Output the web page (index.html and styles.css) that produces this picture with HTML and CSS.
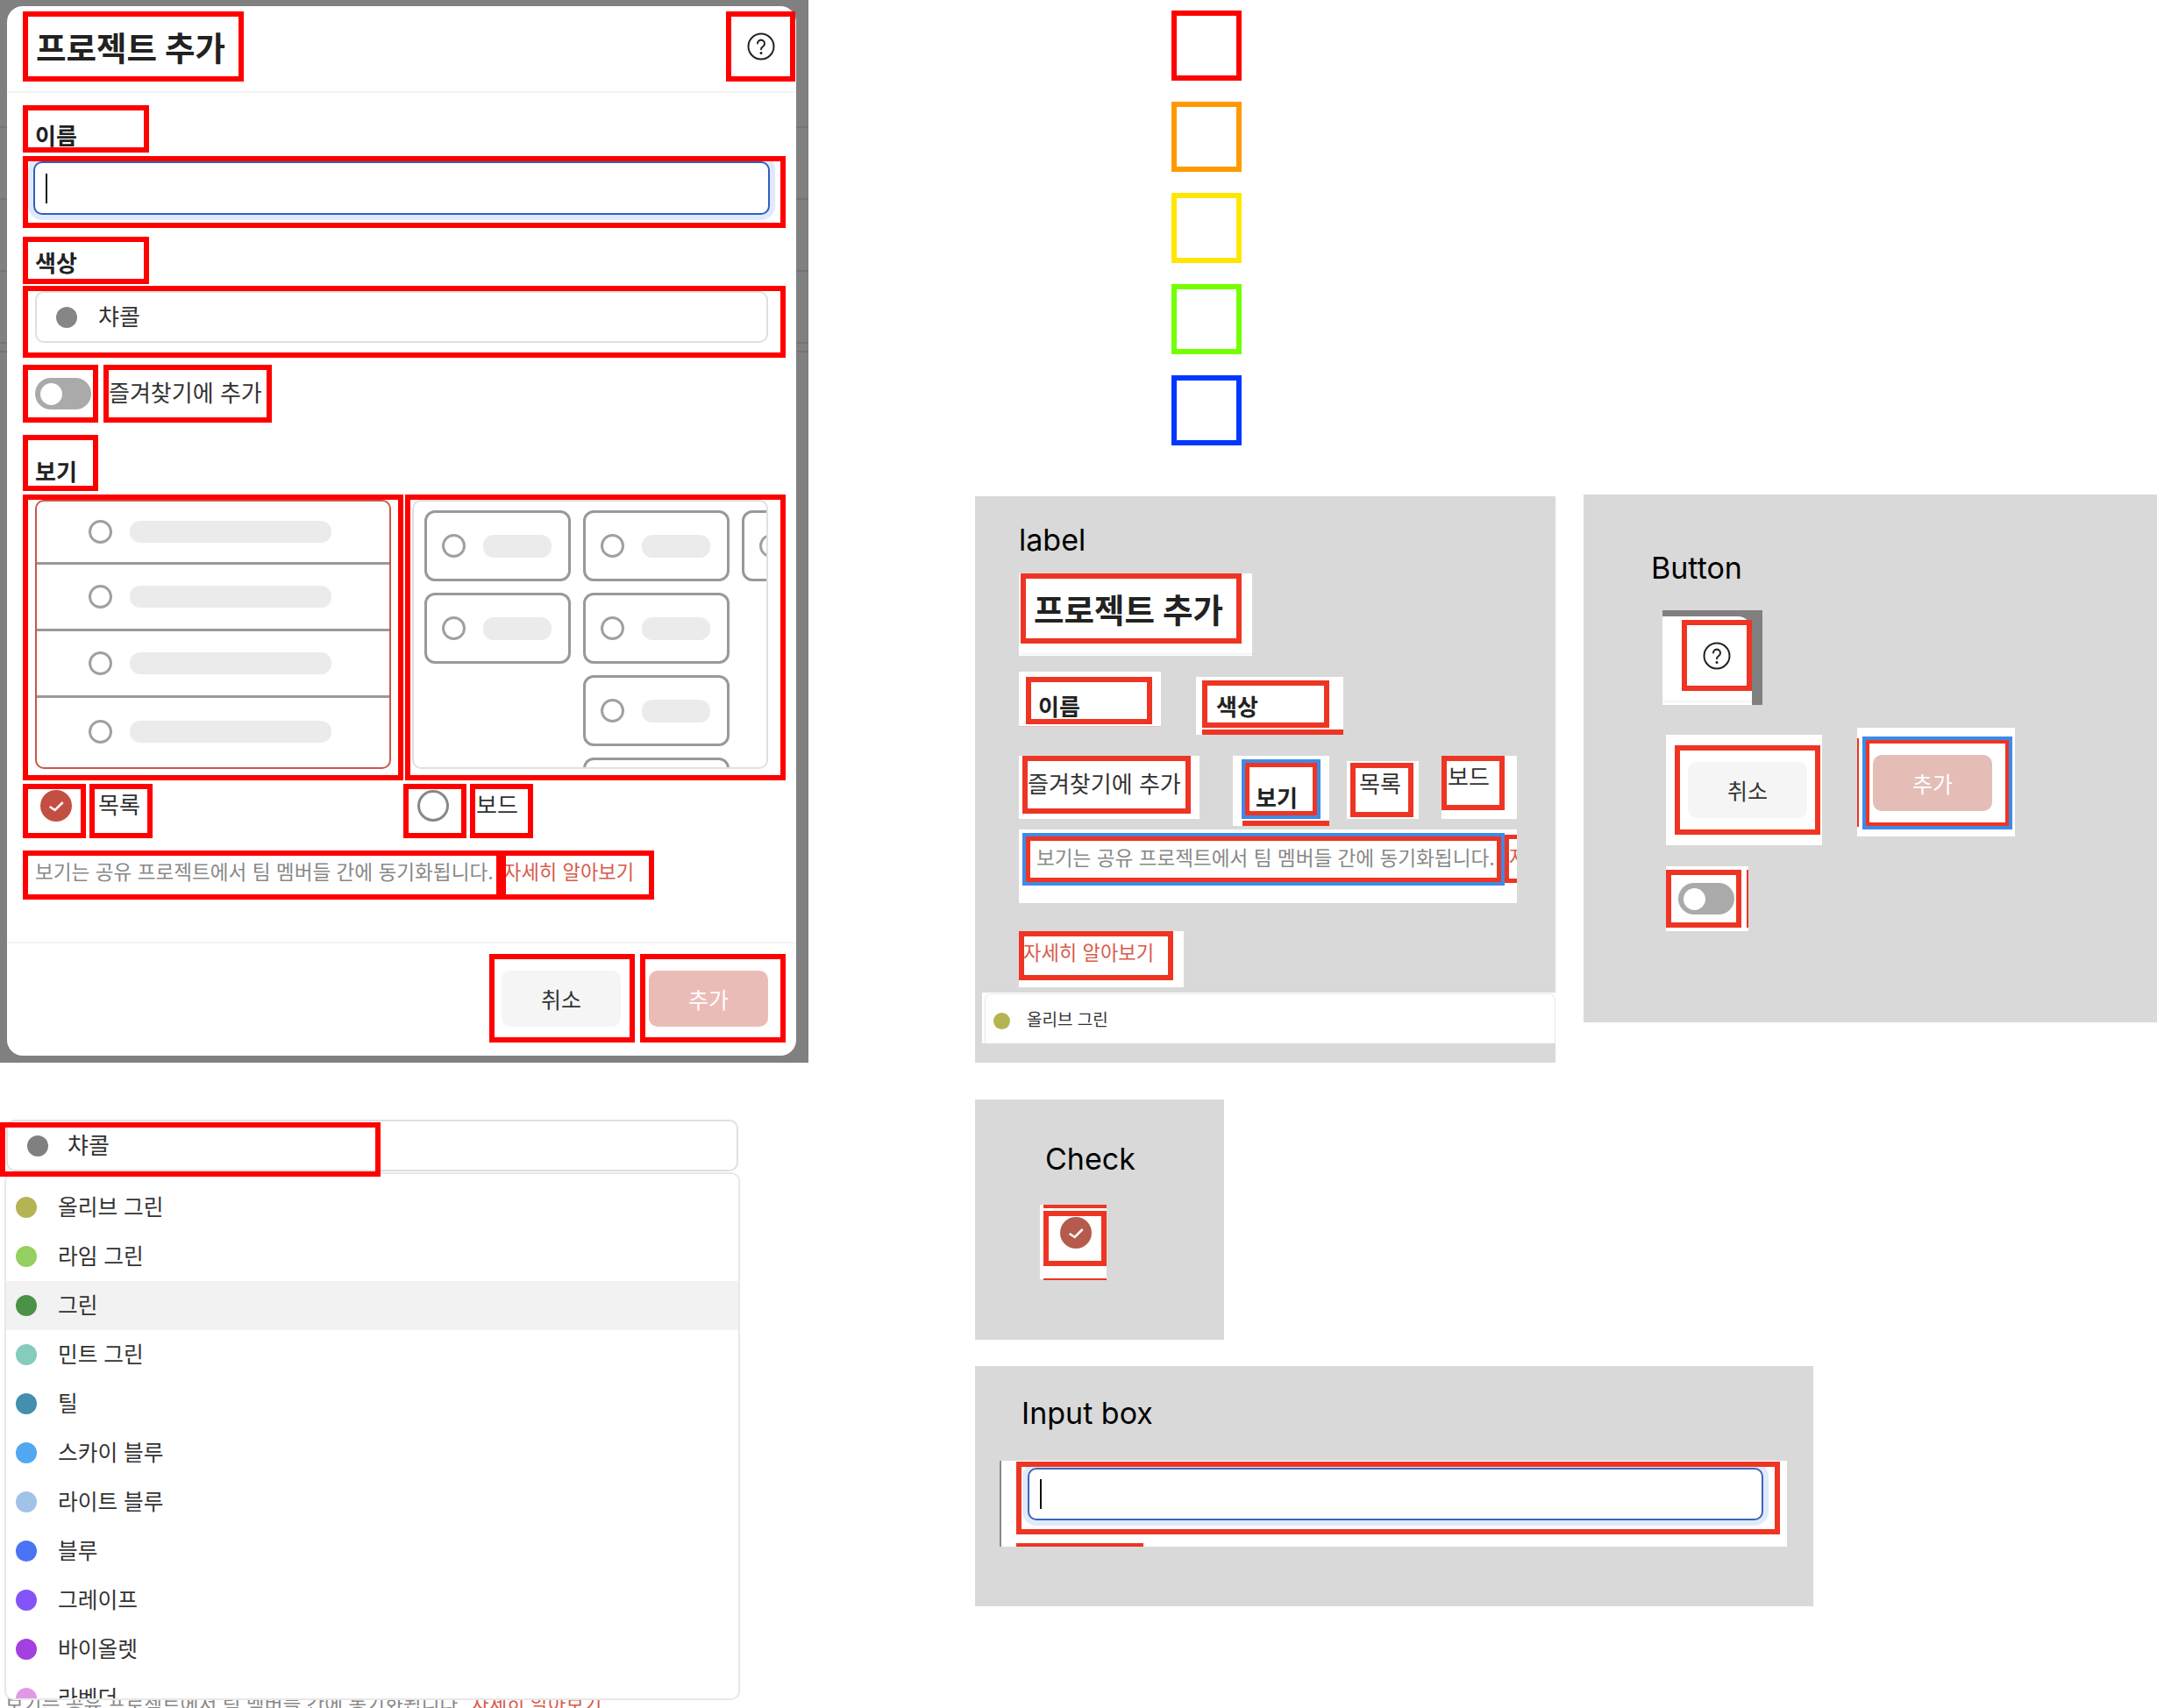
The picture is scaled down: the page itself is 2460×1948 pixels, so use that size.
FILE: index.html
```html
<!DOCTYPE html>
<html lang="ko">
<head>
    <meta charset="utf-8">
    <title>프로젝트 추가</title>
    <link rel="stylesheet" href="styles.css">
</head>
<body>
<div class="board">

    <!-- colour key -->
    <div class="key">
        <div class="key-box key-red"></div>
        <div class="key-box key-orange"></div>
        <div class="key-box key-yellow"></div>
        <div class="key-box key-green"></div>
        <div class="key-box key-blue"></div>
    </div>

    <!-- dialog -->
    <div class="backdrop">
        <div class="modal">
            <div class="modal-head">
                <div class="mark mark-title"><span class="title-text">프로젝트 추가</span></div>
                <div class="mark mark-help">
                    <svg class="help-icon" viewBox="0 0 32 32"><circle cx="16" cy="16" r="14.5"/><path d="M12 12.6a4 4 0 1 1 6.2 3.4c-1.4 .9-2.2 1.6-2.2 3.2"/><circle class="help-dot" cx="16" cy="23.4" r="1.5"/></svg>
                </div>
            </div>
            <div class="modal-body">
                <div class="mark mark-label mark-name"><span class="label-text">이름</span></div>
                <div class="mark mark-input"><div class="field"><span class="caret"></span></div></div>
                <div class="mark mark-label mark-color"><span class="label-text">색상</span></div>
                <div class="mark mark-select">
                    <div class="select"><span class="dot dot-charcoal"></span><span class="body-text">챠콜</span></div>
                </div>
                <div class="row-fav">
                    <div class="mark mark-toggle"><span class="toggle"><span class="knob"></span></span></div>
                    <div class="mark mark-fav"><span class="body-text">즐겨찾기에 추가</span></div>
                </div>
                <div class="mark mark-label mark-view"><span class="label-text">보기</span></div>
                <div class="row-previews">
                    <div class="mark mark-preview">
                        <div class="preview preview-list">
                            <div class="list-row"><span class="radio"></span><span class="bar bar-long"></span></div>
                            <div class="list-row"><span class="radio"></span><span class="bar bar-long"></span></div>
                            <div class="list-row"><span class="radio"></span><span class="bar bar-long"></span></div>
                            <div class="list-row list-row-last"><span class="radio"></span><span class="bar bar-long"></span></div>
                        </div>
                    </div>
                    <div class="mark mark-preview mark-preview-board">
                        <div class="preview preview-board">
                            <div class="tiles">
                                <div class="tile"><span class="radio"></span><span class="bar"></span></div>
                                <div class="tile"><span class="radio"></span><span class="bar"></span></div>
                                <div class="tile"><span class="radio"></span><span class="bar"></span></div>
                                <div class="tile"><span class="radio"></span><span class="bar"></span></div>
                                <div class="tile"><span class="radio"></span><span class="bar"></span></div>
                                <div class="tile tile-mid"><span class="radio"></span><span class="bar"></span></div>
                                <div class="tile tile-mid"><span class="radio"></span><span class="bar"></span></div>
                            </div>
                        </div>
                    </div>
                </div>
                <div class="row-options">
                    <div class="option">
                        <div class="mark mark-opt mark-check">
                            <svg class="check" viewBox="0 0 36 36"><circle class="check-bg" cx="18" cy="18" r="18"/><polyline class="check-tick" points="10.7,19 16.7,23 25.7,14"/></svg>
                        </div>
                        <div class="mark mark-opt"><span class="body-text">목록</span></div>
                    </div>
                    <div class="option">
                        <div class="mark mark-opt mark-check mark-check-off"><span class="radio radio-big"></span></div>
                        <div class="mark mark-opt mark-board-text"><span class="body-text">보드</span></div>
                    </div>
                </div>
                <div class="row-hint">
                    <div class="mark mark-hint"><span class="hint-text">보기는 공유 프로젝트에서 팀 멤버들 간에 동기화됩니다.</span></div>
                    <div class="mark mark-link"><span class="link-text">자세히 알아보기</span></div>
                </div>
            </div>
            <div class="modal-foot">
                <div class="mark mark-btn mark-cancel"><span class="btn btn-cancel">취소</span></div>
                <div class="mark mark-btn mark-add"><span class="btn btn-add">추가</span></div>
            </div>
        </div>
    </div>

    <!-- colour dropdown -->
    <div class="peek-hint"><span class="hint-text">보기는 공유 프로젝트에서 팀 멤버들 간에 동기화됩니다.</span> <span class="link-text peek-link">자세히 알아보기</span></div>
    <div class="select select-open"><span class="dot dot-charcoal dot-dark"></span><span class="body-text">챠콜</span></div>
    <div class="menu">
        <div class="menu-item"><span class="dot dot-olive"></span><span class="body-text">올리브 그린</span></div>
        <div class="menu-item"><span class="dot dot-lime"></span><span class="body-text">라임 그린</span></div>
        <div class="menu-item menu-item-on"><span class="dot dot-forest"></span><span class="body-text">그린</span></div>
        <div class="menu-item"><span class="dot dot-mint"></span><span class="body-text">민트 그린</span></div>
        <div class="menu-item"><span class="dot dot-teal"></span><span class="body-text">틸</span></div>
        <div class="menu-item"><span class="dot dot-sky"></span><span class="body-text">스카이 블루</span></div>
        <div class="menu-item"><span class="dot dot-light"></span><span class="body-text">라이트 블루</span></div>
        <div class="menu-item"><span class="dot dot-blue"></span><span class="body-text">블루</span></div>
        <div class="menu-item"><span class="dot dot-grape"></span><span class="body-text">그레이프</span></div>
        <div class="menu-item"><span class="dot dot-violet"></span><span class="body-text">바이올렛</span></div>
        <div class="menu-item"><span class="dot dot-lavender"></span><span class="body-text">라벤더</span></div>
    </div>
    <div class="mark menu-mark"></div>

    <!-- label parts -->
    <div class="panel panel-label"><span class="panel-title">label</span></div>
    <div class="strip s-title">
        <div class="cut cut-title"><span class="title-text">프로젝트 추가</span></div>
        <div class="rule"></div>
    </div>
    <div class="strip s-name">
        <div class="cut cut-name"><span class="label-text">이름</span></div>
    </div>
    <div class="strip s-color">
        <div class="cut cut-color"><span class="label-text">색상</span></div>
        <div class="cut-bar cut-bar-color"></div>
    </div>
    <div class="strip s-fav">
        <div class="cut cut-fav"><span class="body-text">즐겨찾기에 추가</span></div>
    </div>
    <div class="strip s-view">
        <div class="blue blue-view">
            <div class="cut cut-inner cut-view"><span class="label-text">보기</span></div>
        </div>
        <div class="cut-bar cut-bar-view"></div>
    </div>
    <div class="strip s-listword">
        <div class="cut cut-listword"><span class="body-text">목록</span></div>
    </div>
    <div class="strip s-boardword">
        <div class="cut cut-boardword"><span class="body-text">보드</span></div>
    </div>
    <div class="strip s-hint">
        <div class="blue blue-hint">
            <div class="cut cut-inner cut-hint"><span class="hint-text">보기는 공유 프로젝트에서 팀 멤버들 간에 동기화됩니다.</span></div>
        </div>
        <div class="cut cut-frag"><span class="link-text">자세히</span></div>
    </div>
    <div class="strip s-link">
        <div class="cut cut-link"><span class="link-text">자세히 알아보기</span></div>
    </div>
    <div class="strip s-olive">
        <div class="olive-card"><span class="dot dot-olive dot-small"></span><span class="small-text">올리브 그린</span></div>
    </div>

    <!-- button parts -->
    <div class="panel panel-button"><span class="panel-title">Button</span></div>
    <div class="strip s-help">
        <div class="help-crop">
            <div class="cut cut-help">
                <svg class="help-icon" viewBox="0 0 32 32"><circle cx="16" cy="16" r="14.5"/><path d="M12 12.6a4 4 0 1 1 6.2 3.4c-1.4 .9-2.2 1.6-2.2 3.2"/><circle class="help-dot" cx="16" cy="23.4" r="1.5"/></svg>
            </div>
            <div class="rule rule-help"></div>
        </div>
    </div>
    <div class="strip s-cancel">
        <div class="cut cut-cancel"><span class="btn btn-cancel">취소</span></div>
    </div>
    <div class="strip s-add">
        <div class="cut-sliver cut-sliver-add"></div>
        <div class="blue blue-add">
            <div class="cut cut-add"><span class="btn btn-add btn-add-crop">추가</span></div>
        </div>
    </div>
    <div class="strip s-toggle">
        <div class="cut cut-toggle"><span class="toggle"><span class="knob"></span></span></div>
        <div class="cut-sliver cut-sliver-toggle"></div>
    </div>

    <!-- check part -->
    <div class="panel panel-check"><span class="panel-title">Check</span></div>
    <div class="strip s-check">
        <div class="cut-bar cut-bar-check"></div>
        <div class="cut cut-check">
            <svg class="check" viewBox="0 0 36 36"><circle class="check-bg check-bg-crop" cx="18" cy="18" r="18"/><polyline class="check-tick" points="10.7,19 16.7,23 25.7,14"/></svg>
        </div>
        <div class="cut-bar cut-bar-check2"></div>
    </div>

    <!-- input part -->
    <div class="panel panel-input"><span class="panel-title">Input box</span></div>
    <div class="strip s-input">
        <div class="cut cut-input"><div class="field field-crop"><span class="caret"></span></div></div>
        <div class="cut-bar cut-bar-input"></div>
    </div>

</div>
</body>
</html>
```

FILE: styles.css
```css
* { box-sizing: border-box; }

html, body { margin: 0; padding: 0; background: #fff; overflow: hidden; }

body {
    font-family: "Inter", "Noto Sans CJK KR", sans-serif;
    color: #333;
}

/* free canvas: everything on it is placed by hand */
.board { position: relative; width: 2460px; height: 1948px; overflow: hidden; }

/* colour key */
.key { position: absolute; left: 1336px; top: 12px; display: flex; flex-direction: column; gap: 24px; }
.key-box { width: 80px; height: 80px; border: 6px solid; }
.key-red { border-color: #ff0000; }
.key-orange { border-color: #ff9900; }
.key-yellow { border-color: #ffe600; }
.key-green { border-color: #73ff00; }
.key-blue { border-color: #0038ff; }

/* text */
.title-text { font-size: 37.5px; line-height: 44px; font-weight: 700; color: #222; white-space: nowrap; }
.label-text { font-size: 26px; line-height: 30px; font-weight: 700; color: #222; white-space: nowrap; }
.body-text { font-size: 26px; line-height: 30px; color: #333; white-space: nowrap; }
.hint-text { font-size: 22.6px; line-height: 30px; color: #888; white-space: nowrap; }
.link-text { font-size: 22.2px; line-height: 30px; color: #d85a4c; white-space: nowrap; }
.small-text { font-size: 19px; line-height: 24px; color: #333; white-space: nowrap; }
.panel-title { font-size: 34px; line-height: 40px; color: #000; }

/* annotation boxes on the dialog */
.mark { border: 6px solid #ff0000; display: flex; align-items: center; flex: none; }

/* dialog, the dimmed page behind it still shows its row lines */
.backdrop {
    position: absolute; left: 0; top: 0; width: 922px; height: 1212px;
    padding: 7px 14px 8px 8px;
    background-color: #808080;
    background-image:
        linear-gradient(#747474, #747474), linear-gradient(#747474, #747474),
        linear-gradient(#747474, #747474), linear-gradient(#747474, #747474),
        linear-gradient(#747474, #747474);
    background-size: 100% 2px;
    background-repeat: no-repeat;
    background-position: 0 144px, 0 226px, 0 308px, 0 390px, 0 400px;
}
.modal { width: 900px; height: 1197px; background: #fff; border-radius: 18px; display: flex; flex-direction: column; }

.modal-head { height: 99px; padding: 6px 1px 0 18px; display: flex; justify-content: space-between; align-items: flex-start; border-bottom: 2px solid #f4f4f4; flex: none; }
.mark-title { width: 252px; height: 80px; padding: 5px 0 0 9px; }
.mark-help { width: 79px; height: 80px; justify-content: center; }
.help-icon { width: 32px; height: 32px; fill: none; stroke: #222; stroke-width: 2; stroke-linecap: round; }
.help-dot { fill: #222; stroke: none; }

.modal-body { padding: 14px 12px 0 18px; flex: 1; }
.mark-label { width: 144px; height: 54px; align-items: flex-start; padding-left: 8px; }
.mark-name { padding-top: 15px; }
.mark-color { margin-top: 10px; padding-top: 10px; }
.mark-view { width: 86px; height: 64px; margin-top: 14px; padding-left: 8px; padding-top: 22px; }

.mark-input { width: 870px; height: 82px; margin-top: 4px; padding-left: 6px; align-items: flex-start; overflow: hidden; }
.field {
    width: 840px; height: 61px; border: 2px solid #2f5fc0; border-radius: 10px; background: #fff;
    box-shadow: 0 0 0 6px #dfeafc; display: flex; align-items: center; padding-left: 12px; flex: none;
}
.caret { width: 2px; height: 34px; background: #111; }

.mark-select { width: 870px; height: 82px; margin-top: 2px; padding-left: 8px; align-items: flex-start; }
.select { width: 836px; height: 59px; border: 2px solid #e0e0e0; border-radius: 10px; background: #fff; display: flex; align-items: center; padding-left: 22px; gap: 24px; flex: none; }

.dot { width: 24px; height: 24px; border-radius: 50%; flex: none; }
.dot-small { width: 19px; height: 19px; }
.dot-charcoal { background: #868686; }
.dot-dark { background: #808080; }
.dot-olive { background: #b5b452; }
.dot-lime { background: #94cf5f; }
.dot-forest { background: #4b9147; }
.dot-mint { background: #86ccbc; }
.dot-teal { background: #438fad; }
.dot-sky { background: #50a8f0; }
.dot-light { background: #a1c3e8; }
.dot-blue { background: #4a74f5; }
.dot-grape { background: #8354f8; }
.dot-violet { background: #a340e0; }
.dot-lavender { background: #e09ae5; }

.row-fav { display: flex; gap: 6px; margin-top: 8px; }
.mark-toggle { width: 86px; height: 66px; padding-left: 8px; }
.mark-fav { width: 192px; height: 66px; padding-left: 0; }
.toggle { width: 64px; height: 36px; border-radius: 18px; background: #aaa; display: flex; align-items: center; padding-left: 6px; flex: none; }
.knob { width: 25px; height: 25px; border-radius: 50%; background: #fff; }

.row-previews { display: flex; gap: 2px; margin-top: 4px; }
.mark-preview { width: 434px; height: 326px; align-items: flex-start; padding-left: 8px; }
.mark-preview-board { padding-left: 2px; }
.preview { width: 406px; height: 307px; border: 2px solid #e0e0e0; border-radius: 10px; overflow: hidden; flex: none; }
.preview-list { border-color: #c9574a; }
.list-row { height: 76px; padding-left: 59px; display: flex; align-items: center; gap: 20px; border-bottom: 3px solid #999; }
.list-row:first-child { height: 72px; }
.list-row-last { border-bottom: none; }
.radio { width: 27px; height: 27px; border-radius: 50%; border: 3px solid #a0a0a0; background: #fff; flex: none; }
.bar { width: 78px; height: 26px; border-radius: 12px; background: #ebebeb; flex: none; }
.bar-long { width: 230px; height: 25px; }

.tiles { display: grid; grid-template-columns: repeat(3, 167px); grid-auto-rows: 81px; column-gap: 14px; row-gap: 13px; padding: 10px 0 0 12px; }
.tile { border: 3px solid #999; border-radius: 12px; display: flex; align-items: center; gap: 20px; padding-left: 17px; }
.tile-mid { grid-column: 2; }

.row-options { display: grid; grid-template-columns: 434px 434px; margin-top: 4px; }
.option { display: flex; gap: 4px; }
.mark-opt { width: 72px; height: 62px; padding-left: 4px; align-items: flex-start; }
.mark-board-text { padding-left: 1px; }
.mark-check { padding-left: 14px; padding-top: 0; }
.mark-check-off { padding-left: 10px; }
.mark-opt .body-text { margin-top: 4px; }
.check { width: 36px; height: 36px; margin-top: 1px; flex: none; }
.check-bg { fill: #c34f42; }
.check-tick { fill: none; stroke: #fff; stroke-width: 2.5; }
.radio-big { width: 36px; height: 36px; border-color: #888; margin-top: 1px; }

.row-hint { display: flex; margin-top: 14px; }
.mark-hint { width: 546px; height: 56px; padding: 0 0 7px 8px; }
.mark-link { width: 175px; height: 56px; margin-left: -1px; padding: 0 0 7px 0; overflow: hidden; }
.mark-link .link-text { margin-left: -3px; }

.modal-foot { height: 130px; padding: 12px 12px 0 0; display: flex; justify-content: flex-end; gap: 6px; border-top: 2px solid #f4f4f4; flex: none; }
.mark-btn { width: 166px; height: 101px; }
.mark-cancel { padding-left: 8px; }
.mark-add { padding-left: 4px; }
.btn { width: 136px; height: 64px; border-radius: 10px; display: flex; align-items: center; justify-content: center; font-size: 25px; flex: none; }
.btn-cancel { background: #f5f5f5; color: #333; }
.btn-add { background: #ebbcb7; color: #fff; }
.btn-add-crop { background: #e4bdb7; }

/* dropdown */
.peek-hint { position: absolute; left: 6px; top: 1929px; white-space: nowrap; }
.peek-link { margin-left: 4px; }
.select-open { position: absolute; left: 7px; top: 1277px; width: 835px; height: 59px; padding-left: 22px; gap: 22px; }
.menu { position: absolute; left: 5px; top: 1337px; width: 839px; height: 602px; background: #fff; border: 2px solid #e8e8e8; border-radius: 10px; padding-top: 10px; overflow: hidden; }
.menu-item { height: 56px; display: flex; align-items: center; padding-left: 11px; gap: 24px; }
.menu-item .body-text { font-size: 24.7px; }
.menu-item-on { background: #f2f2f2; }
.menu-mark { position: absolute; left: 0; top: 1280px; width: 434px; height: 62px; }

/* grey panels with cut-outs pasted on them */
.panel { position: absolute; background: #d9d9d9; }
.panel-label { left: 1112px; top: 566px; width: 662px; height: 646px; padding: 30px 0 0 50px; }
.panel-button { left: 1806px; top: 564px; width: 654px; height: 602px; padding: 64px 0 0 77px; }
.panel-check { left: 1112px; top: 1254px; width: 284px; height: 274px; padding: 48px 0 0 80px; }
.panel-input { left: 1112px; top: 1558px; width: 956px; height: 274px; padding: 34px 0 0 53px; }

.strip { position: absolute; background: #fff; }
.cut { border: 6px solid #ee3524; display: flex; align-items: center; flex: none; }
.cut-inner { border-width: 5px; }
.blue { border: 4px solid #3f8ae6; flex: none; }
.cut-bar { background: #ee3524; }
.cut-sliver { background: #ee3524; width: 2px; flex: none; }
.rule { height: 2px; margin-top: 11px; background: #f4f4f4; }

.s-title { left: 1162px; top: 654px; width: 266px; height: 94px; padding-left: 2px; }
.cut-title { width: 252px; height: 80px; padding: 5px 0 0 9px; }

.s-name { left: 1162px; top: 766px; width: 162px; height: 63px; padding: 6px 0 0 8px; border-bottom: 1px solid #f2b8b2; }
.cut-name { width: 144px; height: 54px; align-items: flex-start; padding: 14px 0 0 8px; }

.s-color { left: 1364px; top: 772px; width: 168px; height: 66px; padding: 4px 0 0 7px; }
.cut-color { width: 145px; height: 54px; align-items: flex-start; padding: 10px 0 0 10px; }
.cut-bar-color { width: 161px; height: 6px; margin-top: 2px; }

.s-fav { left: 1162px; top: 862px; width: 206px; height: 72px; padding-left: 4px; }
.cut-fav { width: 192px; height: 66px; padding-left: 0; }

.s-view { left: 1406px; top: 862px; width: 110px; height: 80px; padding: 4px 0 0 10px; }
.blue-view { width: 90px; height: 68px; }
.cut-view { width: 82px; height: 60px; align-items: flex-start; padding: 21px 0 0 7px; }
.cut-bar-view { width: 99px; height: 6px; margin: 2px 0 0 1px; }

.s-listword { left: 1536px; top: 868px; width: 82px; height: 66px; padding: 2px 0 0 4px; }
.cut-listword { width: 72px; height: 62px; align-items: flex-start; padding: 4px 0 0 4px; }

.s-boardword { left: 1644px; top: 862px; width: 86px; height: 72px; }
.cut-boardword { width: 72px; height: 62px; align-items: flex-start; padding: 4px 0 0 1px; }

.s-hint { left: 1162px; top: 946px; width: 568px; height: 84px; padding: 4px 0 0 4px; display: flex; align-items: flex-start; }
.blue-hint { width: 550px; height: 60px; }
.cut-hint { width: 542px; height: 52px; padding: 0 0 3px 7px; overflow: hidden; }
.cut-frag { width: 14px; height: 55px; margin-top: 2px; border-width: 5px 0 5px 5px; padding-bottom: 3px; overflow: hidden; }

.s-link { left: 1162px; top: 1062px; width: 188px; height: 64px; }
.cut-link { width: 176px; height: 56px; padding: 0 0 6px 0; overflow: hidden; }
.cut-link .link-text { margin-left: -1px; }

.s-olive { left: 1120px; top: 1132px; width: 654px; height: 58px; padding: 1px 0 0 3px; }
.olive-card { height: 57px; border: 1px solid #e8e8e8; border-width: 1px 1px 0 1px; border-radius: 8px 8px 0 0; display: flex; align-items: center; padding: 4px 0 0 9px; gap: 19px; }

.s-help { left: 1896px; top: 696px; width: 114px; height: 108px; background: #808080; padding-top: 7px; }
.help-crop { width: 102px; height: 101px; background: #fff; border-radius: 0 16px 0 0; padding: 4px 0 0 22px; }
.cut-help { width: 80px; height: 81px; justify-content: center; }
.rule-help { margin-left: -22px; }

.s-cancel { left: 1900px; top: 838px; width: 178px; height: 126px; padding: 12px 0 0 10px; }
.cut-cancel { width: 166px; height: 102px; padding-left: 9px; }

.s-add { left: 2118px; top: 830px; width: 180px; height: 124px; padding-top: 10px; display: flex; align-items: flex-start; gap: 4px; }
.cut-sliver-add { height: 101px; margin-top: 2px; }
.blue-add { width: 171px; height: 106px; }
.cut-add { width: 163px; height: 98px; border-width: 4px; padding-left: 4px; }

.s-toggle { left: 1900px; top: 988px; width: 94px; height: 74px; padding-top: 4px; display: flex; align-items: flex-start; gap: 6px; }
.cut-toggle { width: 86px; height: 66px; padding-left: 8px; }
.cut-sliver-toggle { height: 66px; }

.s-check { left: 1186px; top: 1374px; width: 76px; height: 85px; padding-left: 4px; }
.cut-bar-check { height: 4px; }
.cut-check { width: 72px; height: 63px; margin-top: 3px; align-items: flex-start; padding-left: 13px; }
.check-bg-crop { fill: #b55a4d; }
.cut-bar-check2 { height: 2px; margin-top: 14px; }

.s-input { left: 1140px; top: 1666px; width: 898px; height: 98px; padding: 1px 0 0 17px; border-left: 2px solid #888; }
.cut-input { width: 871px; height: 83px; align-items: flex-start; padding: 1px 0 0 7px; overflow: hidden; }
.field-crop { width: 839px; height: 60px; border-color: #3e63b8; }
.cut-bar-input { width: 145px; height: 4px; margin-top: 10px; }
```
